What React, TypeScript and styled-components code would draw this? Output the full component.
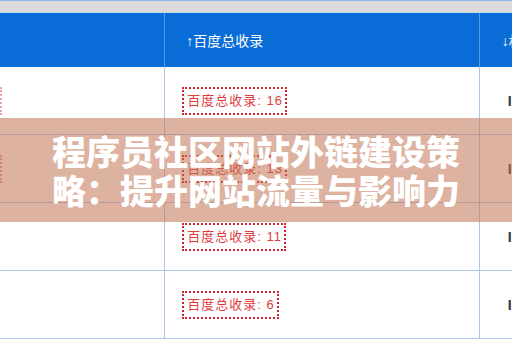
import styled, { createGlobalStyle } from 'styled-components';

const GlobalStyle = createGlobalStyle`
  html, body {
    margin: 0;
    padding: 0;
    background: #ffffff;
  }
  body {
    font-family: "Liberation Sans", "Noto Sans CJK SC", sans-serif;
    overflow: hidden;
  }
`;

interface Row {
  total: number;
  edge: boolean;
}

const rows: Row[] = [
  { total: 16, edge: true },
  { total: 13, edge: true },
  { total: 11, edge: false },
  { total: 6, edge: false },
];

const App = () => {
  return (
    <>
      <GlobalStyle />
      <Page>
        <TopStrip />
        <Table>
          <thead>
            <tr>
              <HeadCell $width={165} />
              <HeadCell $width={314}>↑百度总收录</HeadCell>
              <HeadCell $width={80} $last>↓权重</HeadCell>
            </tr>
          </thead>
          <tbody>
            {rows.map((row) => (
              <tr key={row.total}>
                <Cell $pad={0}>{row.edge && <TagEdge />}</Cell>
                <Cell $pad={17}>
                  <Tag>百度总收录: {row.total}</Tag>
                </Cell>
                <Cell $pad={28} $last>
                  <Rank>I</Rank>
                </Cell>
              </tr>
            ))}
          </tbody>
        </Table>
        <Banner>
          <Title>
            程序员社区网站外链建设策
            <br />
            略：提升网站流量与影响力
          </Title>
        </Banner>
      </Page>
    </>
  );
};

const Page = styled.div`
  position: relative;
  width: 512px;
  height: 340px;
  overflow: hidden;
  border-top: 1px solid #8db5e6;
  box-sizing: border-box;
`;

const TopStrip = styled.div`
  height: 11px;
  background: #dcdcdc;
  border-bottom: 1px solid #c9d6e8;
`;

const Table = styled.table`
  border-collapse: separate;
  border-spacing: 0;
  width: 560px;
  table-layout: fixed;
`;

const HeadCell = styled.th<{ $width: number; $last?: boolean }>`
  width: ${(p) => p.$width}px;
  height: 54px;
  padding: 0 0 0 ${(p) => (p.$last ? 22 : 21)}px;
  box-sizing: border-box;
  background: #0a6dd7;
  color: #ffffff;
  font-size: 14px;
  font-weight: 400;
  text-align: left;
  white-space: nowrap;
  overflow: hidden;
  border-right: ${(p) => (p.$last ? 'none' : '1px solid #5a9be6')};
`;

const Cell = styled.td<{ $pad: number; $last?: boolean }>`
  height: 68px;
  padding: 0 0 0 ${(p) => p.$pad}px;
  box-sizing: border-box;
  border-right: ${(p) => (p.$last ? 'none' : '1px solid #a9c7e8')};
  border-bottom: 1px solid #a9c7e8;
  vertical-align: middle;
  white-space: nowrap;
  overflow: hidden;
`;

const Tag = styled.span`
  display: inline-block;
  padding: 2px 2px 2px 3px;
  border: 2px dotted #d3202e;
  color: #e23b3b;
  font-size: 13px;
  line-height: 20px;
  letter-spacing: 1px;
`;

const TagEdge = styled.span`
  display: block;
  width: 0;
  height: 28px;
  border-right: 2px dotted #eea0a0;
`;

const Rank = styled.span`
  color: #333333;
  font-size: 14px;
  font-weight: 700;
`;

const Banner = styled.div`
  position: absolute;
  left: 0;
  right: 0;
  top: 117px;
  height: 104px;
  background: rgba(193, 115, 82, 0.55);
  display: flex;
  align-items: center;
  justify-content: center;
`;

const Title = styled.div`
  color: #ffffff;
  font-family: "Noto Sans CJK SC", sans-serif;
  font-weight: 900;
  font-size: 34px;
  line-height: 39px;
  text-align: center;
  white-space: nowrap;
`;

export default App;
